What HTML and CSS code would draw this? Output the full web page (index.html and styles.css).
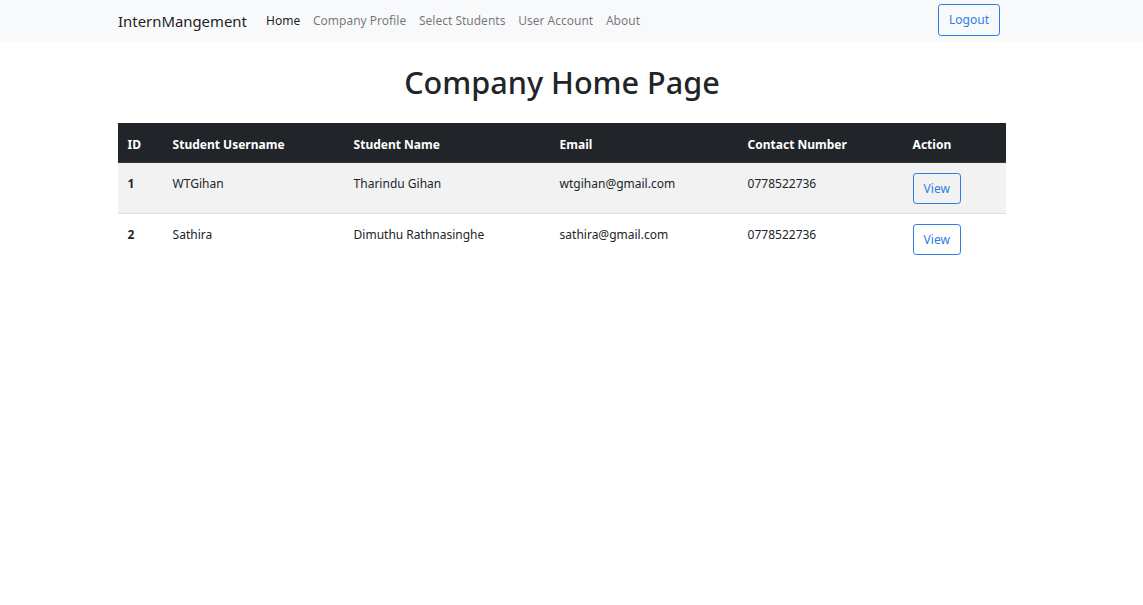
FILE: index.html
```html
<!DOCTYPE html>
<html lang="en">
<head>
<meta charset="utf-8">
<title>Company Home Page</title>
<link rel="stylesheet" href="styles.css">
</head>
<body>
<nav class="navbar">
  <div class="container nav-inner">
    <a class="brand" href="#">InternMangement</a>
    <ul class="nav-links">
      <li><a class="nav-link active" href="#">Home</a></li>
      <li><a class="nav-link" href="#">Company Profile</a></li>
      <li><a class="nav-link" href="#">Select Students</a></li>
      <li><a class="nav-link" href="#">User Account</a></li>
      <li><a class="nav-link" href="#">About</a></li>
    </ul>
    <button class="btn btn-outline logout">Logout</button>
  </div>
</nav>
<main class="container">
  <h1 class="title">Company Home Page</h1>
  <table class="table">
    <colgroup>
      <col class="c1"><col class="c2"><col class="c3"><col class="c4"><col class="c5"><col class="c6">
    </colgroup>
    <thead>
      <tr><th>ID</th><th>Student Username</th><th>Student Name</th><th>Email</th><th>Contact Number</th><th>Action</th></tr>
    </thead>
    <tbody>
      <tr class="striped">
        <th>1</th><td>WTGihan</td><td>Tharindu Gihan</td><td>wtgihan@gmail.com</td><td>0778522736</td>
        <td class="action"><button class="btn btn-outline">View</button></td>
      </tr>
      <tr>
        <th>2</th><td>Sathira</td><td>Dimuthu Rathnasinghe</td><td>sathira@gmail.com</td><td>0778522736</td>
        <td class="action"><button class="btn btn-outline">View</button></td>
      </tr>
    </tbody>
  </table>
</main>
</body>
</html>
```
FILE: styles.css
```css
* { box-sizing: border-box; }
html, body { margin: 0; padding: 0; }
body {
  font-family: "Noto Sans", "Open Sans", sans-serif;
  font-size: 12px;
  line-height: 19.2px;
  color: #212529;
  background: #fff;
}
.container {
  width: 888px;
  margin-left: 118px;
}
.navbar {
  background: #f8f9fa;
  height: 42px;
}
.nav-inner {
  display: flex;
  align-items: center;
  height: 42px;
  width: 882px;
}
.brand {
  font-size: 14.9px;
  line-height: 24px;
  color: rgba(0,0,0,.9);
  text-decoration: none;
  margin-right: 12.8px;
  white-space: nowrap;
}
.nav-links {
  display: flex;
  list-style: none;
  margin: 0;
  padding: 0;
  flex: 1;
}
.nav-link {
  display: block;
  padding: 6.4px 6.4px;
  color: rgba(0,0,0,.55);
  text-decoration: none;
  white-space: nowrap;
}
.nav-link.active { color: rgba(0,0,0,.9); }
.btn {
  font-family: inherit;
  font-size: 12px;
  line-height: 19.2px;
  padding: 5px 10px;
  border-radius: 3.2px;
  background: transparent;
  cursor: pointer;
}
.btn-outline {
  border: 1px solid #2f7be8;
  color: #2f7be8;
}
.logout { margin-top: -2px; }
.title {
  font-size: 30.6px;
  font-weight: 500;
  line-height: 38px;
  text-align: center;
  margin: 21px 0 22px;
}
.table {
  width: 888px;
  border-collapse: collapse;
  table-layout: fixed;
}
.c1 { width: 45px; }
.c2 { width: 181px; }
.c3 { width: 206px; }
.c4 { width: 188px; }
.c5 { width: 165px; }
.c6 { width: 103px; }
.table th, .table td {
  padding: 11px 9.6px 8.2px;
  text-align: left;
  vertical-align: top;
  border-top: 1px solid #dee2e6;
}
.table td.action { padding: 9.6px; }
.table thead th {
  background: #212529;
  color: #fff;
  font-weight: 700;
  border-top: none;
  border-bottom: 1px solid #32383e;
  vertical-align: middle;
  padding: 11.6px 9.6px 8.2px;
}
.table tbody th { font-weight: 700; }
.table tr.striped { background: #f2f2f2; }
```
